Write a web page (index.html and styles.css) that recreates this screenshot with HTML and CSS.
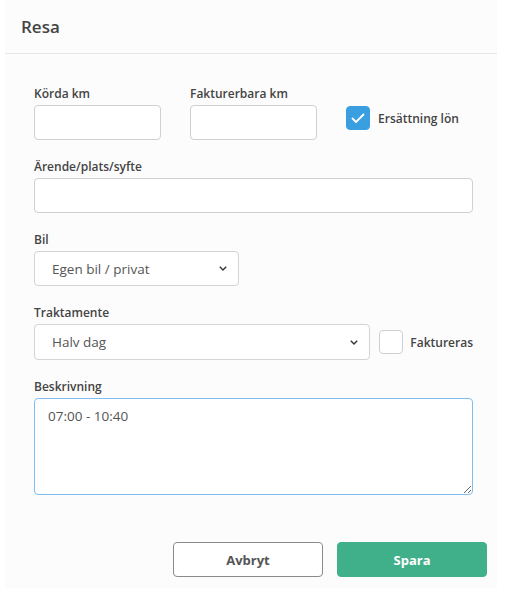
FILE: index.html
```html
<!DOCTYPE html>
<html lang="sv">
<head>
<meta charset="utf-8">
<title>Resa</title>
<link rel="stylesheet" href="styles.css">
</head>
<body>
<div class="panel">
  <div class="header">Resa</div>
  <div class="body">
    <div class="row row-top">
      <div class="field w-km">
        <label class="label">Körda km</label>
        <input class="input" type="text">
      </div>
      <div class="field w-km">
        <label class="label">Fakturerbara km</label>
        <input class="input" type="text">
      </div>
      <div class="check-field">
        <span class="checkbox checked">
          <svg width="14" height="11" viewBox="0 0 14 11"><polyline points="1.5,5.5 5,9 12.5,1.5" fill="none" stroke="#fff" stroke-width="1.8" stroke-linecap="round" stroke-linejoin="round"/></svg>
        </span>
        <span class="check-label">Ersättning lön</span>
      </div>
    </div>
    <div class="field">
      <label class="label">Ärende/plats/syfte</label>
      <input class="input" type="text">
    </div>
    <div class="field w-bil">
      <label class="label">Bil</label>
      <div class="select select-short">
        <span>Egen bil / privat</span>
        <svg class="chev" width="8" height="5" viewBox="0 0 8 5"><polyline points="0.8,0.8 4,4 7.2,0.8" fill="none" stroke="#333" stroke-width="1.4"/></svg>
      </div>
    </div>
    <div class="field">
      <label class="label">Traktamente</label>
      <div class="row row-trakt">
        <div class="select grow">
          <span>Halv dag</span>
          <svg class="chev" width="8" height="5" viewBox="0 0 8 5"><polyline points="0.8,0.8 4,4 7.2,0.8" fill="none" stroke="#333" stroke-width="1.4"/></svg>
        </div>
        <div class="check-field small">
          <span class="checkbox"></span>
          <span class="check-label">Faktureras</span>
        </div>
      </div>
    </div>
    <div class="field">
      <label class="label">Beskrivning</label>
      <textarea class="textarea">07:00 - 10:40</textarea>
    </div>
  </div>
  <div class="footer">
    <button class="btn btn-cancel">Avbryt</button>
    <button class="btn btn-save">Spara</button>
  </div>
</div>
</body>
</html>
```
FILE: styles.css
```css
* { box-sizing: border-box; }
html, body { margin: 0; padding: 0; background: #ffffff; }
body { font-family: "Open Sans", "Liberation Sans", sans-serif; color: #4a4a4a; }

.panel {
  margin-left: 5px;
  width: 492px;
  background: #fcfcfc;
  padding-bottom: 11px;
}
.header {
  height: 54px;
  padding: 15px 0 0 16px;
  font-size: 17px;
  font-weight: 600;
  color: #444;
  border-bottom: 1px solid #e8e8e8;
}
.body {
  padding: 32px 24px 0 29px;
  display: flex;
  flex-direction: column;
  gap: 19px;
}
.row { display: flex; }
.row-top { gap: 29px; align-items: flex-start; }
.field { display: flex; flex-direction: column; }
.w-km { width: 127px; }
.w-bil { width: 205px; }
.label {
  font-size: 12px;
  line-height: 16px;
  font-weight: 600;
  color: #444;
  margin-bottom: 3px;
}
.input {
  height: 35px;
  border: 1px solid #cfcfd4;
  border-radius: 4px;
  background: #fff;
  font: inherit;
  font-size: 13.5px;
  padding: 0 12px;
  outline: none;
}
.select {
  height: 36px;
  border: 1px solid #d4d4d8;
  border-radius: 4px;
  background: #fff;
  display: flex;
  align-items: center;
  justify-content: space-between;
  padding: 0 11px 0 17px;
  font-size: 13.5px;
  color: #555;
}
.select-short { height: 35px; }
.chev { display: block; }
.grow { flex: 1; }
.row-trakt { gap: 9px; align-items: center; }
.check-field {
  display: flex;
  align-items: center;
  gap: 8px;
  margin-top: 20px;
}
.check-field.small { margin-top: 0; gap: 7px; }
.checkbox {
  width: 24px;
  height: 24px;
  border: 1px solid #d0d0d4;
  border-radius: 4px;
  background: #fff;
  display: flex;
  align-items: center;
  justify-content: center;
}
.checkbox.checked {
  background: #3a9fe0;
  border-color: #3a9fe0;
}
.check-label {
  font-size: 12px;
  font-weight: 600;
  color: #444;
}
.textarea {
  height: 97px;
  border: 1px solid #7fbdf2;
  border-radius: 4px;
  background: #fff;
  font: inherit;
  font-size: 13.5px;
  color: #555;
  padding: 8px 13px;
  resize: vertical;
  outline: none;
}
.footer {
  display: flex;
  justify-content: flex-end;
  gap: 14px;
  padding: 47px 10px 0 0;
}
.btn {
  width: 150px;
  height: 35px;
  border-radius: 4px;
  font-family: inherit;
  font-size: 13px;
  font-weight: 700;
  cursor: pointer;
}
.btn-cancel {
  background: #fff;
  border: 1px solid #8a8a8a;
  color: #555;
}
.btn-save {
  background: #40b08a;
  border: 1px solid #40b08a;
  color: #fff;
}
```
